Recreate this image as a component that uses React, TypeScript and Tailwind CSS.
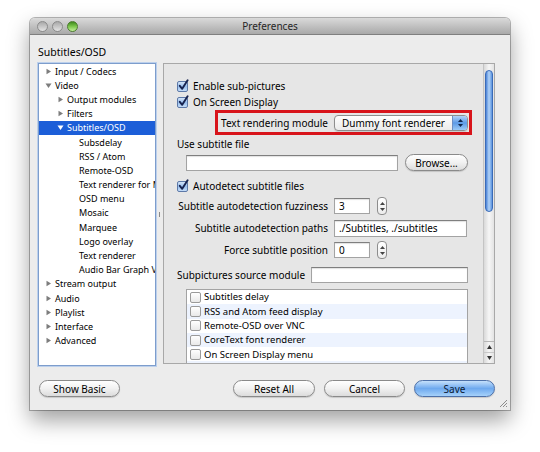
import React from 'react';

// Preferences window (Mac OS X Leopard look)

type TreeItem = { label: string; level: 0 | 1 | 2; arrow?: 'right' | 'down'; selected?: boolean };

const TREE: TreeItem[] = [
  { label: 'Input / Codecs', level: 0, arrow: 'right' },
  { label: 'Video', level: 0, arrow: 'down' },
  { label: 'Output modules', level: 1, arrow: 'right' },
  { label: 'Filters', level: 1, arrow: 'right' },
  { label: 'Subtitles/OSD', level: 1, arrow: 'down', selected: true },
  { label: 'Subsdelay', level: 2 },
  { label: 'RSS / Atom', level: 2 },
  { label: 'Remote-OSD', level: 2 },
  { label: 'Text renderer for Mac OS X', level: 2 },
  { label: 'OSD menu', level: 2 },
  { label: 'Mosaic', level: 2 },
  { label: 'Marquee', level: 2 },
  { label: 'Logo overlay', level: 2 },
  { label: 'Text renderer', level: 2 },
  { label: 'Audio Bar Graph Video sub source', level: 2 },
  { label: 'Stream output', level: 0, arrow: 'right' },
  { label: 'Audio', level: 0, arrow: 'right' },
  { label: 'Playlist', level: 0, arrow: 'right' },
  { label: 'Interface', level: 0, arrow: 'right' },
  { label: 'Advanced', level: 0, arrow: 'right' },
];

const INDENT = ['pl-[6px]', 'pl-[18px]', 'pl-[30px]'];

const SUBMODULES = [
  'Subtitles delay',
  'RSS and Atom feed display',
  'Remote-OSD over VNC',
  'CoreText font renderer',
  'On Screen Display menu',
  'Mosaic',
];

const Triangle = ({ dir, white }: { dir: 'right' | 'down'; white?: boolean }) => (
  <svg width="7" height="7" viewBox="0 0 7 7">
    {dir === 'right' ? (
      <path d="M1.5 0.8 L6 3.5 L1.5 6.2 Z" fill={white ? '#ffffff' : '#7d7d7d'} />
    ) : (
      <path d="M0.5 1.5 L6.5 1.5 L3.5 6 Z" fill={white ? '#ffffff' : '#7d7d7d'} />
    )}
  </svg>
);

const CheckBox = ({ checked }: { checked?: boolean }) => (
  <div className="relative w-[11px] h-[11px] shrink-0">
    {checked ? (
      <div className="w-[11px] h-[11px] rounded-[2px] border border-[#5d79a8] bg-gradient-to-b from-[#d4e4f7] via-[#98bfee] to-[#c4dcf7]" />
    ) : (
      <div className="w-[11px] h-[11px] rounded-[2px] border border-[#9a9a9a] bg-gradient-to-b from-white to-[#e9e9e9]" />
    )}
    {checked && (
      <svg className="absolute left-[1px] top-[-2px]" width="11" height="12" viewBox="0 0 11 12">
        <path d="M1.8 6.8 L4.2 9.8 L9.6 1.2" fill="none" stroke="#17234f" strokeWidth="1.9" strokeLinecap="round" strokeLinejoin="round" />
      </svg>
    )}
  </div>
);

const Stepper = () => (
  <div className="w-[10px] h-[18px] rounded-[4px] border border-[#8d8d8d] bg-gradient-to-b from-white to-[#ececec] flex flex-col items-center justify-center gap-[3px]">
    <svg width="5" height="3" viewBox="0 0 5 3">
      <path d="M0 3 L2.5 0 L5 3 Z" fill="#444" />
    </svg>
    <svg width="5" height="3" viewBox="0 0 5 3">
      <path d="M0 0 L5 0 L2.5 3 Z" fill="#444" />
    </svg>
  </div>
);

const Field = ({ className, value }: { className: string; value?: string }) => (
  <div
    className={`${className} shrink-0 bg-white border border-[#a3a3a3] border-t-[#7f7f7f] shadow-[inset_0_1px_1px_rgba(0,0,0,0.12)] flex items-center pl-[4px] text-[10px] leading-none whitespace-nowrap overflow-hidden`}
  >
    {value}
  </div>
);

const Button = ({ label, className, primary }: { label: string; className: string; primary?: boolean }) => (
  <div
    className={`${className} shrink-0 h-[17px] rounded-full flex items-center justify-center text-[10px] leading-none shadow-[0_1px_1px_rgba(0,0,0,0.15)] ${
      primary
        ? 'border border-[#4d70a8] bg-gradient-to-b from-[#c5e0fb] via-[#6ea9ee] to-[#a6d1fa] text-[#0b1a33]'
        : 'border border-[#8a8a8a] bg-gradient-to-b from-white via-[#f1f1f1] to-[#dcdcdc] text-black'
    }`}
  >
    {label}
  </div>
);

const TitleBar = () => (
  <div className="h-[17px] shrink-0 rounded-t-[5px] border-b border-[#7f7f7f] bg-gradient-to-b from-[#dadada] to-[#a9a9a9] grid grid-cols-[1fr_auto_1fr] items-center">
    <div className="flex items-center gap-[4px] pl-[7px]">
      <div className="w-[11px] h-[11px] rounded-full border border-[#8b8b8b] bg-gradient-to-b from-[#a9a9a9] to-[#e4e4e4]" />
      <div className="w-[11px] h-[11px] rounded-full border border-[#8b8b8b] bg-gradient-to-b from-[#a9a9a9] to-[#e4e4e4]" />
      <div className="w-[11px] h-[11px] rounded-full border border-[#4c7d2e] bg-gradient-to-b from-[#3e8b1c] via-[#7cc74b] to-[#c3f09a]" />
    </div>
    <div className="text-[10px] leading-none text-[#262626]">Preferences</div>
    <div />
  </div>
);

const TreePanel = () => (
  <div className="w-[118px] h-[303px] shrink-0 bg-white border border-[#7d9dcc] shadow-[0_0_0_1px_#bcd0ec] overflow-hidden">
    {TREE.map((item) => (
      <div
        key={item.label}
        className={`h-[14.2px] flex items-center whitespace-nowrap text-[9px] leading-none ${INDENT[item.level]} ${
          item.selected ? 'bg-[#1c5ed8] text-white' : 'text-black'
        }`}
      >
        <div className="w-[10px] shrink-0 flex items-center">
          {item.arrow && <Triangle dir={item.arrow} white={item.selected} />}
        </div>
        {item.label}
      </div>
    ))}
  </div>
);

const ScrollBar = () => (
  <div className="w-[11px] shrink-0 flex flex-col border-l border-[#c4c4c4] bg-gradient-to-r from-[#d9d9d9] via-[#f6f6f6] to-[#e3e3e3]">
    <div className="flex-1 pt-[6px] px-[1px]">
      <div className="h-[142px] rounded-full border border-[#3a6bb8] bg-gradient-to-r from-[#4a82d6] via-[#b4d4f7] to-[#5b93de]" />
    </div>
    <div className="h-[11px] border-t border-[#b5b5b5] flex items-center justify-center">
      <svg width="5" height="4" viewBox="0 0 5 4">
        <path d="M0 4 L2.5 0 L5 4 Z" fill="#333" />
      </svg>
    </div>
    <div className="h-[11px] border-t border-[#c8c8c8] flex items-center justify-center">
      <svg width="5" height="4" viewBox="0 0 5 4">
        <path d="M0 0 L5 0 L2.5 4 Z" fill="#333" />
      </svg>
    </div>
  </div>
);

const SettingsPanel = () => (
  <div className="w-[332px] h-[301px] shrink-0 border border-[#a8a8a8] bg-[#e6e6e6] flex overflow-hidden">
    <div className="flex-1 overflow-hidden pl-[13px] pt-[14px] flex flex-col text-[10px] leading-none text-black whitespace-nowrap">
      <div className="h-[16px] shrink-0 flex items-center gap-[5px]">
        <CheckBox checked />
        Enable sub-pictures
      </div>
      <div className="h-[16px] shrink-0 flex items-center gap-[5px]">
        <CheckBox checked />
        On Screen Display
      </div>

      <div className="ml-[38px] w-[257px] h-[25px] shrink-0 border-[3px] border-[#d8141b] flex items-center justify-end pr-[1px] gap-[6px]">
        Text rendering module
        <div className="w-[134px] h-[16px] shrink-0 rounded-[4px] border border-[#8e8e8e] bg-gradient-to-b from-white to-[#ebebeb] flex overflow-hidden shadow-[0_1px_1px_rgba(0,0,0,0.12)]">
          <div className="flex-1 flex items-center pl-[7px]">Dummy font renderer</div>
          <div className="w-[15px] border-l border-[#6d8fc4] bg-gradient-to-b from-[#b3d3f7] via-[#5c9ae6] to-[#9ccaf7] flex flex-col items-center justify-center gap-[2px]">
            <svg width="5" height="3" viewBox="0 0 5 3">
              <path d="M0 3 L2.5 0 L5 3 Z" fill="#10264d" />
            </svg>
            <svg width="5" height="3" viewBox="0 0 5 3">
              <path d="M0 0 L5 0 L2.5 3 Z" fill="#10264d" />
            </svg>
          </div>
        </div>
      </div>

      <div className="mt-[1px] h-[16px] shrink-0 flex items-center">Use subtitle file</div>
      <div className="mt-[2px] h-[17px] shrink-0 flex items-center">
        <Field className="ml-[9px] w-[212px] h-[16px]" />
        <Button label="Browse..." className="ml-[7px] w-[63px]" />
      </div>

      <div className="mt-[7px] h-[16px] shrink-0 flex items-center gap-[5px]">
        <CheckBox checked />
        Autodetect subtitle files
      </div>

      <div className="mt-[3px] h-[18px] shrink-0 flex items-center">
        <div className="w-[151px] shrink-0 text-right">Subtitle autodetection fuzziness</div>
        <Field className="ml-[6px] w-[36px] h-[16px]" value="3" />
        <div className="ml-[7px]">
          <Stepper />
        </div>
      </div>
      <div className="mt-[4px] h-[18px] shrink-0 flex items-center">
        <div className="w-[151px] shrink-0 text-right">Subtitle autodetection paths</div>
        <Field className="ml-[6px] w-[133px] h-[17px]" value="./Subtitles, ./subtitles" />
      </div>
      <div className="mt-[4px] h-[18px] shrink-0 flex items-center">
        <div className="w-[151px] shrink-0 text-right">Force subtitle position</div>
        <Field className="ml-[6px] w-[36px] h-[16px]" value="0" />
        <div className="ml-[7px]">
          <Stepper />
        </div>
      </div>

      <div className="mt-[8px] h-[16px] shrink-0 flex items-center">
        <div className="w-[134px] shrink-0">Subpictures source module</div>
        <Field className="w-[157px] h-[16px]" />
      </div>

      <div className="mt-[6px] ml-[9px] w-[282px] shrink-0 border border-[#a3a3a3] bg-white text-[9.5px]">
        {SUBMODULES.map((name, i) => (
          <div
            key={name}
            className={`h-[14.3px] flex items-center gap-[3px] pl-[3px] ${i % 2 === 1 ? 'bg-[#edf3fe]' : 'bg-white'}`}
          >
            <CheckBox />
            {name}
          </div>
        ))}
      </div>
    </div>
    <ScrollBar />
  </div>
);

export default function App() {
  return (
    <div className="w-[540px] h-[452px] bg-white pt-[18px] pl-[30px] overflow-hidden font-['Noto_Sans','DejaVu_Sans',sans-serif]">
      <div className="relative w-[480px] h-[392px] flex flex-col rounded-t-[5px] bg-[#ececec] shadow-[0_0_0_1px_rgba(0,0,0,0.28),0_10px_22px_rgba(0,0,0,0.38)]">
        <TitleBar />

        <div className="flex-1 flex flex-col pl-[8px] pr-[15px]">
          <div className="pt-[10px] h-[24px] text-[10.5px] leading-[14px] text-black">Subtitles/OSD</div>

          <div className="mt-[4px] flex">
            <TreePanel />
            <div className="w-[7px] shrink-0 flex items-center justify-center">
              <div className="w-[1px] h-[5px] bg-[#8a8a8a]" />
            </div>
            <SettingsPanel />
          </div>

          <div className="mt-[14px] flex items-center">
            <Button label="Show Basic" className="ml-[1px] w-[81px]" />
            <div className="flex-1" />
            <Button label="Reset All" className="w-[82px]" />
            <Button label="Cancel" className="ml-[9px] w-[81px]" />
            <Button label="Save" className="ml-[9px] w-[81px]" primary />
          </div>
        </div>

        {/* resize grip */}
        <svg className="absolute right-[2px] bottom-[2px]" width="9" height="9" viewBox="0 0 9 9">
          <path d="M8 1 L1 8 M8 4 L4 8 M8 7 L7 8" stroke="#8c8c8c" strokeWidth="1" />
        </svg>
      </div>
    </div>
  );
}
